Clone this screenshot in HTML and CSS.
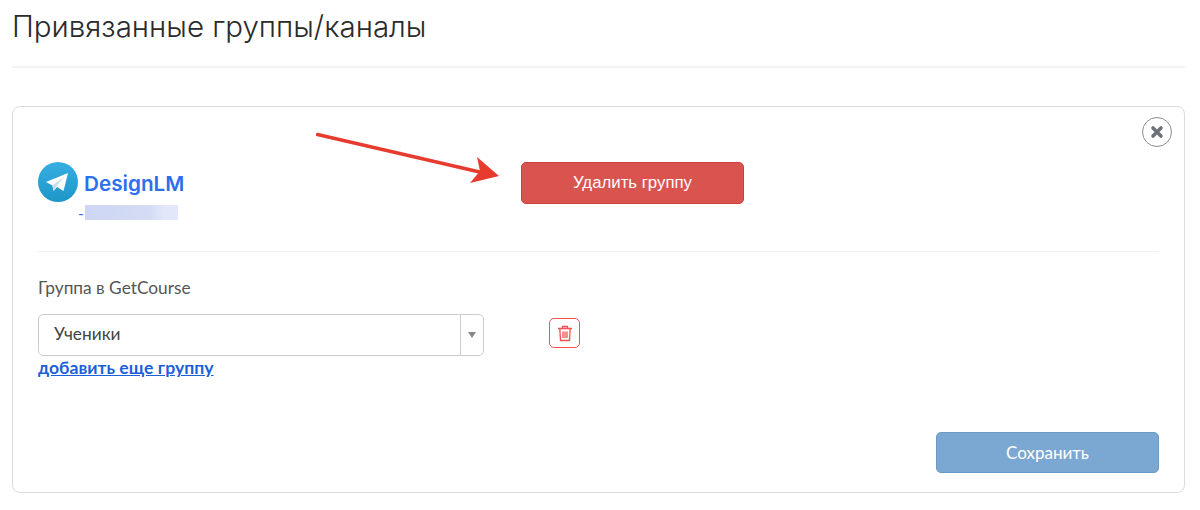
FILE: index.html
```html
<!DOCTYPE html>
<html lang="ru">
<head>
<meta charset="utf-8">
<title>Привязанные группы/каналы</title>
<link rel="stylesheet" href="styles.css">
</head>
<body>
<h1 class="title">Привязанные группы/каналы</h1>
<div class="card">
  <button class="close" type="button" aria-label="Закрыть">
    <svg width="14" height="14" viewBox="0 0 14 14"><path d="M3 3 11 11M11 3 3 11" stroke="#6d7278" stroke-width="3.6" stroke-linecap="round"/></svg>
  </button>
  <svg class="arrow" width="200" height="70" viewBox="0 0 200 70">
    <path d="M1.5 2.5 168 41" stroke="#e63b2e" stroke-width="3.4" stroke-linecap="round" fill="none"/>
    <path d="M161 25 183 44 154 51 164 39Z" fill="#e63b2e"/>
  </svg>
  <div class="top-row">
    <div class="channel">
      <div class="channel-head">
        <svg class="tg" width="40" height="40" viewBox="0 0 40 40">
          <defs><linearGradient id="tgbg" x1="0" y1="0" x2="0" y2="1"><stop offset="0" stop-color="#37aee2"/><stop offset="1" stop-color="#1e96c8"/></linearGradient></defs>
          <circle cx="20" cy="20" r="20" fill="url(#tgbg)"/>
          <path d="M8 20 30 11 25.500 29 19 25 15.500 29 14.500 23.500Z" fill="#fff"/>
          <path d="M14.500 23.500 26.500 14.500 18.500 24 15.500 29Z" fill="#c8dcec"/>
        </svg>
        <span class="channel-name">DesignLM</span>
      </div>
      <div class="channel-id"><span class="dash">-</span><span class="blur"></span></div>
    </div>
    <button class="btn btn-danger" type="button">Удалить группу</button>
  </div>
  <div class="inner-rule"></div>
  <div class="label">Группа в GetCourse</div>
  <div class="select-row">
    <div class="select">
      <span class="select-value">Ученики</span>
      <span class="select-caret"><i></i></span>
    </div>
    <button class="trash" type="button" aria-label="Удалить">
      <svg width="16" height="17" viewBox="0 0 16 17" fill="none" stroke="#f55050" stroke-width="1.300">
        <path d="M1 3.500H15M5.500 3.500V1.500H10.500V3.500M2.800 3.500 3.500 15.500H12.500L13.200 3.500M6 6.500V13M8 6.500V13M10 6.500V13"/>
      </svg>
    </button>
  </div>
  <a class="add-link" href="#">добавить еще группу</a>
  <div class="actions">
    <button class="btn btn-save" type="button">Сохранить</button>
  </div>
</div>
</body>
</html>
```
FILE: styles.css
```css
* { box-sizing: border-box; }
html, body { margin: 0; padding: 0; }
body {
  width: 1200px;
  height: 510px;
  overflow: hidden;
  background: #fff;
  padding: 0 15px 0 12px;
  font-family: Lato, "Liberation Sans", sans-serif;
  color: #333;
}
.title {
  margin: 0;
  height: 68px;
  padding-top: 8px;
  border-bottom: 2px solid #f3f3f3;
  font-family: Inter, "Liberation Sans", sans-serif;
  font-weight: 300;
  font-size: 29.500px;
  line-height: 36px;
  color: #2b2b2b;
}
.card {
  position: relative;
  margin-top: 38px;
  height: 387px;
  border: 1px solid #dcdcdc;
  border-radius: 8px;
  padding: 0 25px;
}
.close {
  position: absolute;
  top: 10px;
  right: 12px;
  width: 30px;
  height: 30px;
  padding: 0;
  background: #fff;
  border: 1px solid #8c8c8c;
  border-radius: 50%;
  display: flex;
  align-items: center;
  justify-content: center;
}
.arrow {
  position: absolute;
  left: 303px;
  top: 25px;
}
.top-row {
  display: flex;
  align-items: flex-start;
  height: 144px;
  padding-top: 55px;
}
.channel { width: 483px; }
.channel-head {
  display: flex;
  align-items: center;
  gap: 6px;
  height: 40px;
}
.tg { flex: none; }
.channel-name {
  padding-top: 2px;
  font-family: Inter, "Liberation Sans", sans-serif;
  font-weight: 600;
  font-size: 20.700px;
  color: #2b6fee;
}
.channel-id {
  display: flex;
  align-items: center;
  height: 15px;
  margin-top: 3px;
  padding-left: 40px;
}
.dash { width: 7px; color: #3f68e8; font-size: 16px; }
.blur {
  display: block;
  width: 93px;
  height: 15px;
  background: linear-gradient(90deg, #cdd6f3 0%, #d4dcf5 70%, #e2e8f9 85%, #e2e8f9 100%);
}
.btn {
  width: 223px;
  border-radius: 5px;
  color: #fff;
  font-family: "Liberation Sans", sans-serif;
  font-size: 16.800px;
  text-align: center;
  padding: 0;
}
.btn-danger {
  height: 42px;
  background: #d9534f;
  border: 1px solid #c9403c;
}
.inner-rule {
  height: 1px;
  background: #eee;
}
.label {
  margin-top: 26px;
  font-size: 17.300px;
  line-height: 20px;
  color: #555;
}
.select-row {
  display: flex;
  align-items: center;
  margin-top: 16px;
}
.select {
  display: flex;
  width: 446px;
  height: 42px;
  border: 1px solid #ccc;
  border-radius: 5px;
  align-items: stretch;
}
.select-value {
  flex: 1;
  padding-left: 15px;
  font-size: 17.300px;
  line-height: 38px;
  color: #444;
}
.select-caret {
  width: 23px;
  border-left: 1px solid #ccc;
  display: flex;
  align-items: center;
  justify-content: center;
}
.select-caret i {
  display: block;
  width: 0;
  height: 0;
  border-left: 4px solid transparent;
  border-right: 4px solid transparent;
  border-top: 6px solid #888;
}
.trash {
  margin-left: 65px;
  margin-bottom: 4px;
  width: 31px;
  height: 30px;
  padding: 0;
  background: #fff;
  border: 1px solid #f55050;
  border-radius: 5px;
  display: flex;
  align-items: center;
  justify-content: center;
}
.add-link {
  display: block;
  width: max-content;
  margin-top: 2px;
  font-size: 17.600px;
  line-height: 20px;
  font-weight: 700;
  color: #1c5fd8;
  text-decoration: underline;
}
.actions {
  display: flex;
  justify-content: flex-end;
  margin-top: 54px;
}
.btn-save {
  height: 41px;
  background: #7ba8d3;
  border: 1px solid #6a9ac8;
  font-family: Lato, "Liberation Sans", sans-serif;
  font-size: 17px;
}
```
